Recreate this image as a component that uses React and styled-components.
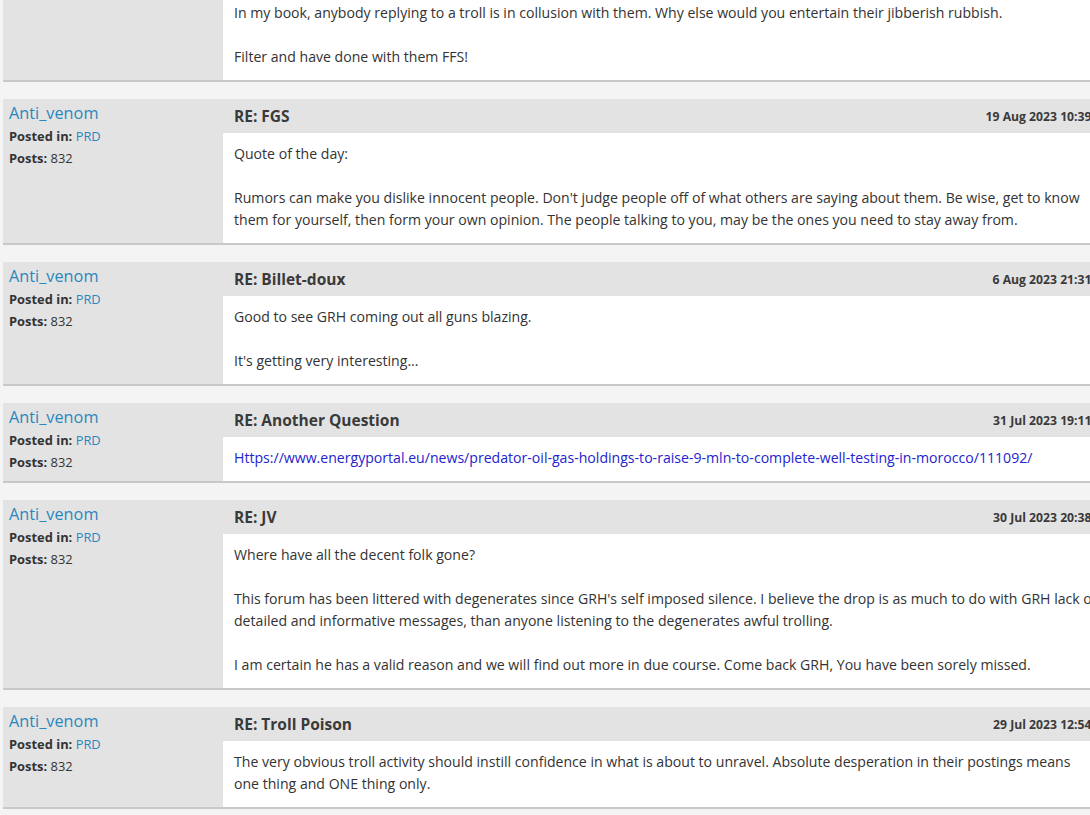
import React from 'react'
import styled, { createGlobalStyle } from 'styled-components'

const GlobalStyle = createGlobalStyle`
  html, body {
    margin: 0;
    padding: 0;
    background: #f4f4f4;
    overflow: hidden;
  }
  body {
    font-family: "Open Sans", "Noto Sans", sans-serif;
    color: #333;
  }
`

// first entry is the tail of a post scrolled past the top of the page
const posts = [
  {
    id: 0,
    continued: true,
    paragraphs: [
      'In my book, anybody replying to a troll is in collusion with them. Why else would you entertain their jibberish rubbish.',
      'Filter and have done with them FFS!',
    ],
  },
  {
    id: 1,
    author: 'Anti_venom',
    board: 'PRD',
    count: 832,
    title: 'RE: FGS',
    date: '19 Aug 2023 10:39',
    paragraphs: [
      'Quote of the day:',
      "Rumors can make you dislike innocent people. Don't judge people off of what others are saying about them. Be wise, get to know them for yourself, then form your own opinion. The people talking to you, may be the ones you need to stay away from.",
    ],
  },
  {
    id: 2,
    author: 'Anti_venom',
    board: 'PRD',
    count: 832,
    title: 'RE: Billet-doux',
    date: '6 Aug 2023 21:31',
    paragraphs: ['Good to see GRH coming out all guns blazing.', "It's getting very interesting..."],
  },
  {
    id: 3,
    author: 'Anti_venom',
    board: 'PRD',
    count: 832,
    title: 'RE: Another Question',
    date: '31 Jul 2023 19:11',
    link: 'Https://www.energyportal.eu/news/predator-oil-gas-holdings-to-raise-9-mln-to-complete-well-testing-in-morocco/111092/',
  },
  {
    id: 4,
    author: 'Anti_venom',
    board: 'PRD',
    count: 832,
    title: 'RE: JV',
    date: '30 Jul 2023 20:38',
    paragraphs: [
      'Where have all the decent folk gone?',
      "This forum has been littered with degenerates since GRH's self imposed silence. I believe the drop is as much to do with GRH lack of detailed and informative messages, than anyone listening to the degenerates awful trolling.",
      'I am certain he has a valid reason and we will find out more in due course. Come back GRH, You have been sorely missed.',
    ],
  },
  {
    id: 5,
    author: 'Anti_venom',
    board: 'PRD',
    count: 832,
    title: 'RE: Troll Poison',
    date: '29 Jul 2023 12:54',
    paragraphs: [
      'The very obvious troll activity should instill confidence in what is about to unravel. Absolute desperation in their postings means one thing and ONE thing only.',
    ],
  },
]

const App = () => (
  <>
    <GlobalStyle />
    <PostList>
      {posts.map((post) => (
        <Post key={post.id}>
          <AuthorBox>
            {!post.continued && (
              <>
                <AuthorName href="#">{post.author}</AuthorName>
                <AuthorMeta>
                  <b>Posted in:</b> <BoardLink href="#">{post.board}</BoardLink>
                </AuthorMeta>
                <AuthorMeta>
                  <b>Posts:</b> {post.count}
                </AuthorMeta>
              </>
            )}
          </AuthorBox>

          <PostMain>
            {!post.continued && (
              <PostHeader>
                <PostTitle>{post.title}</PostTitle>
                <PostDate>{post.date}</PostDate>
              </PostHeader>
            )}
            <PostBody>
              {post.link ? (
                <Paragraph>
                  <BodyLink href="#">{post.link}</BodyLink>
                </Paragraph>
              ) : (
                post.paragraphs.map((text, index) => <Paragraph key={index}>{text}</Paragraph>)
              )}
            </PostBody>
          </PostMain>
        </Post>
      ))}
    </PostList>
  </>
)

export default App

const PostList = styled.div`
  margin-top: -8px;
  padding-left: 3px;
  width: 1105.5px;
`

const Post = styled.article`
  display: grid;
  grid-template-columns: 220px 1fr;
  background: #e3e3e3;
  border-bottom: 2px solid #c8c8c8;
  margin-bottom: 17px;
`

const AuthorBox = styled.aside`
  padding: 3px 6px;
  display: flex;
  flex-direction: column;
`

const AuthorName = styled.a`
  font-size: 16.3px;
  line-height: 23px;
  color: #2a87bd;
  text-decoration: none;
`

const AuthorMeta = styled.div`
  font-size: 12.9px;
  line-height: 22px;
  color: #333;

  b {
    font-weight: 700;
  }
`

const BoardLink = styled.a`
  color: #2a87bd;
  text-decoration: none;
`

const PostMain = styled.div`
  display: flex;
  flex-direction: column;
`

const PostHeader = styled.header`
  height: 34px;
  display: flex;
  align-items: center;
  justify-content: space-between;
  padding: 0 17px 0 11px;
`

const PostTitle = styled.h3`
  margin: 0;
  font-size: 15.5px;
  font-weight: 700;
  color: #3a3a3a;
`

const PostDate = styled.span`
  font-size: 12.2px;
  font-weight: 700;
  color: #3a3a3a;
`

const PostBody = styled.div`
  flex: 1;
  background: #fff;
  padding: 10px 10px 12px 11px;
  font-size: 14.1px;
  line-height: 22px;
`

const Paragraph = styled.p`
  margin: 0 0 22px;

  &:last-child {
    margin-bottom: 0;
  }
`

const BodyLink = styled.a`
  color: #2323cf;
  text-decoration: none;
`
